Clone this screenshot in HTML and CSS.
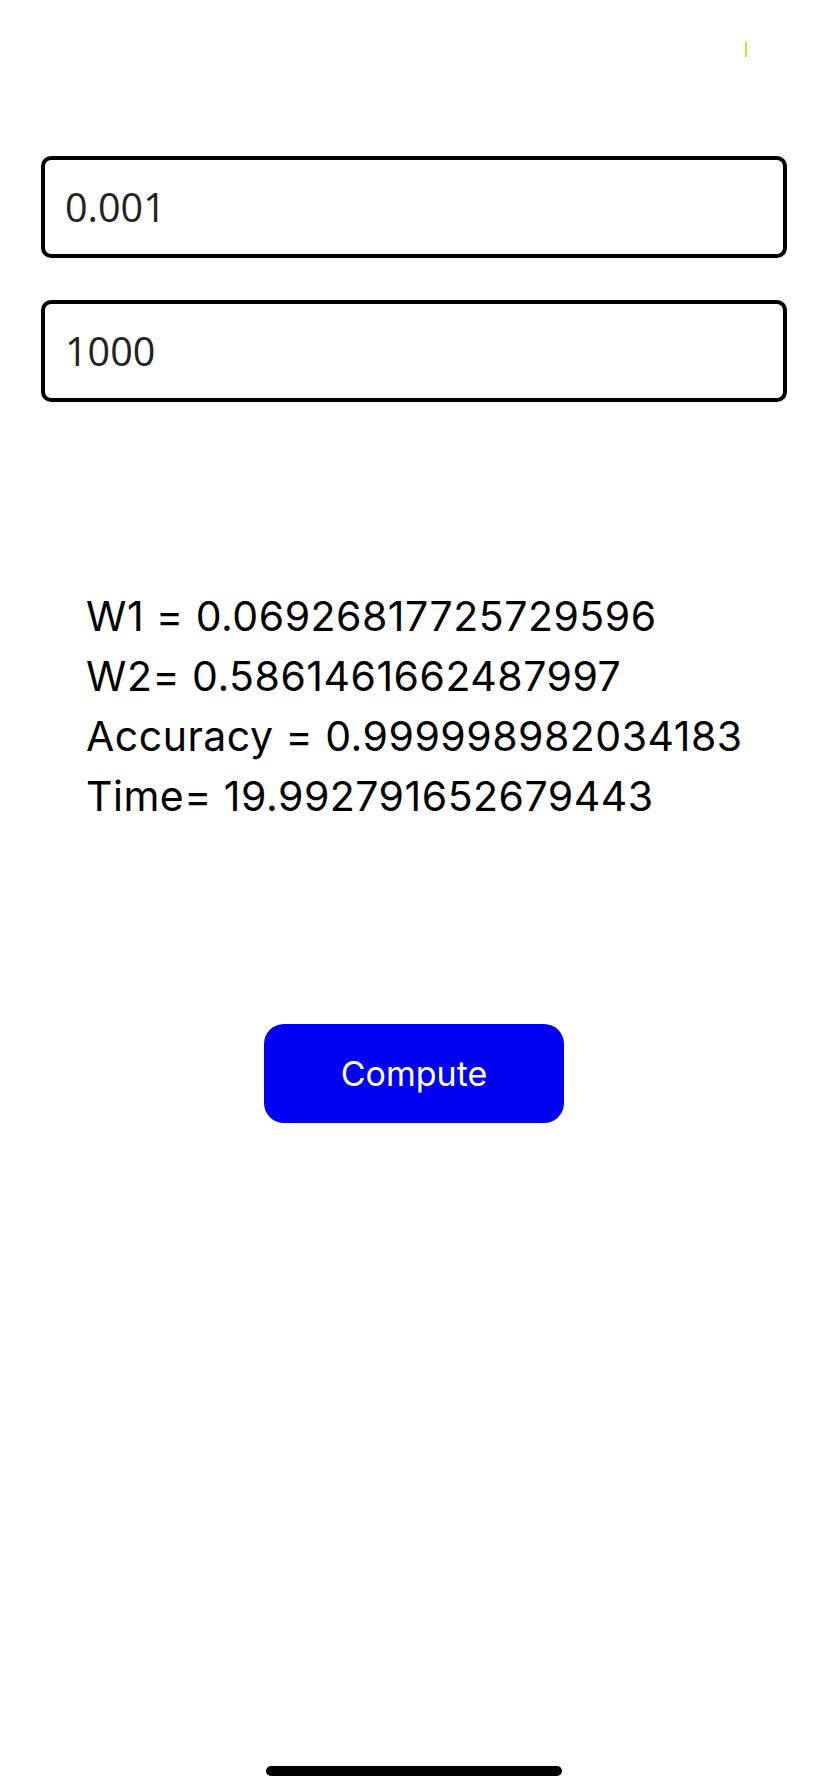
FILE: index.html
```html
<!DOCTYPE html>
<html>
<head>
<meta charset="utf-8">
<link rel="stylesheet" href="styles.css">
</head>
<body>
<div class="screen">
  <span class="cursor-mark"></span>
  <div class="fields">
    <div class="field">0.001</div>
    <div class="field">1000</div>
  </div>
  <div class="results">
    <div class="line">W1 = 0.06926817725729596</div>
    <div class="line">W2= 0.5861461662487997</div>
    <div class="line">Accuracy = 0.999998982034183</div>
    <div class="line">Time= 19.992791652679443</div>
  </div>
  <div class="actions">
    <button class="compute">Compute</button>
  </div>
  <div class="home-bar"></div>
</div>
</body>
</html>
```
FILE: styles.css
```css
html, body {
  margin: 0;
  padding: 0;
  background: #ffffff;
}
.screen {
  position: relative;
  width: 828px;
  height: 1792px;
  display: flex;
  flex-direction: column;
  align-items: center;
  overflow: hidden;
}
.cursor-mark {
  position: absolute;
  left: 745px;
  top: 42px;
  width: 2px;
  height: 15px;
  background: #f6cc3a;
}
.fields {
  margin-top: 156px;
  display: flex;
  flex-direction: column;
  gap: 42px;
  width: 746px;
}
.field {
  box-sizing: border-box;
  height: 102px;
  border: 4px solid #000;
  border-radius: 10px;
  padding: 0 20px;
  display: flex;
  align-items: center;
  font-family: "Open Sans", "Noto Sans", sans-serif;
  font-size: 39.5px;
  color: #222;
}
.results {
  margin-top: 184px;
  align-self: flex-start;
  padding-left: 86px;
  font-family: Inter, "Liberation Sans", sans-serif;
  font-size: 41px;
  letter-spacing: 0.5px;
  line-height: 60px;
  color: #000;
}
.actions {
  margin-top: 198px;
}
.compute {
  width: 300px;
  height: 99px;
  border: none;
  border-radius: 20px;
  background: #0000f2;
  color: #fff;
  font-family: Inter, "Liberation Sans", sans-serif;
  font-size: 34px;
  padding: 0;
}
.home-bar {
  position: absolute;
  left: 266px;
  top: 1766px;
  width: 296px;
  height: 10px;
  border-radius: 5px;
  background: #000;
}
```
